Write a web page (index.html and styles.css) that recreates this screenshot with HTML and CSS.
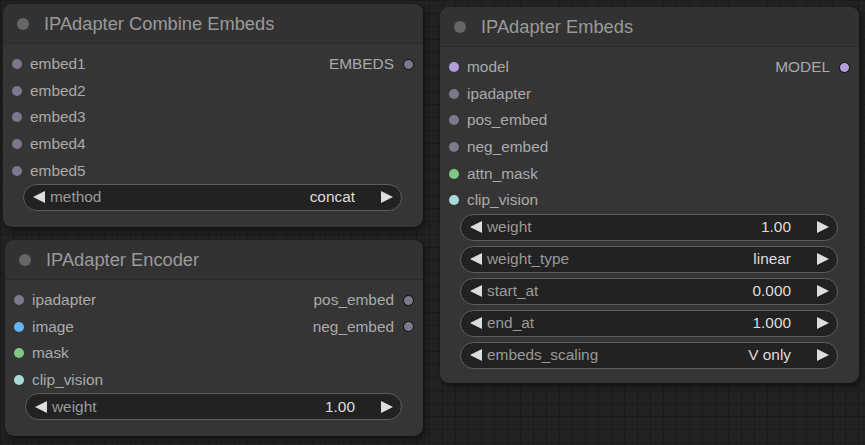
FILE: index.html
```html
<!DOCTYPE html>
<html>
<head>
<meta charset="utf-8">
<link rel="stylesheet" href="styles.css">
</head>
<body>
<div class="canvas">
  <div class="node node-combine">
    <div class="title"><span class="tdot"></span><span class="ttext">IPAdapter Combine Embeds</span></div>
    <div class="body">
      <div class="slots">
        <div class="col">
          <div class="slot in"><span class="dot c-gray"></span>embed1</div>
          <div class="slot in"><span class="dot c-gray"></span>embed2</div>
          <div class="slot in"><span class="dot c-gray"></span>embed3</div>
          <div class="slot in"><span class="dot c-gray"></span>embed4</div>
          <div class="slot in"><span class="dot c-gray"></span>embed5</div>
        </div>
        <div class="col right">
          <div class="slot out">EMBEDS<span class="dot out-dot c-gray"></span></div>
        </div>
      </div>
      <div class="widgets">
        <div class="widget"><svg class="arrow left" viewBox="0 0 12 12"><polygon points="12,0 12,12 0,6"/></svg><span class="wlabel">method</span><span class="wvalue">concat</span><svg class="arrow right" viewBox="0 0 12 12"><polygon points="0,0 0,12 12,6"/></svg></div>
      </div>
    </div>
  </div>

  <div class="node node-encoder">
    <div class="title"><span class="tdot"></span><span class="ttext">IPAdapter Encoder</span></div>
    <div class="body">
      <div class="slots">
        <div class="col">
          <div class="slot in"><span class="dot c-gray"></span>ipadapter</div>
          <div class="slot in"><span class="dot c-blue"></span>image</div>
          <div class="slot in"><span class="dot c-green"></span>mask</div>
          <div class="slot in"><span class="dot c-cyan"></span>clip_vision</div>
        </div>
        <div class="col right">
          <div class="slot out">pos_embed<span class="dot out-dot c-gray"></span></div>
          <div class="slot out">neg_embed<span class="dot out-dot c-gray"></span></div>
        </div>
      </div>
      <div class="widgets">
        <div class="widget"><svg class="arrow left" viewBox="0 0 12 12"><polygon points="12,0 12,12 0,6"/></svg><span class="wlabel">weight</span><span class="wvalue">1.00</span><svg class="arrow right" viewBox="0 0 12 12"><polygon points="0,0 0,12 12,6"/></svg></div>
      </div>
    </div>
  </div>

  <div class="node node-embeds">
    <div class="title"><span class="tdot"></span><span class="ttext">IPAdapter Embeds</span></div>
    <div class="body">
      <div class="slots">
        <div class="col">
          <div class="slot in"><span class="dot c-purple"></span>model</div>
          <div class="slot in"><span class="dot c-gray"></span>ipadapter</div>
          <div class="slot in"><span class="dot c-gray"></span>pos_embed</div>
          <div class="slot in"><span class="dot c-gray"></span>neg_embed</div>
          <div class="slot in"><span class="dot c-green"></span>attn_mask</div>
          <div class="slot in"><span class="dot c-cyan"></span>clip_vision</div>
        </div>
        <div class="col right">
          <div class="slot out">MODEL<span class="dot out-dot c-purple"></span></div>
        </div>
      </div>
      <div class="widgets">
        <div class="widget"><svg class="arrow left" viewBox="0 0 12 12"><polygon points="12,0 12,12 0,6"/></svg><span class="wlabel">weight</span><span class="wvalue">1.00</span><svg class="arrow right" viewBox="0 0 12 12"><polygon points="0,0 0,12 12,6"/></svg></div>
        <div class="widget"><svg class="arrow left" viewBox="0 0 12 12"><polygon points="12,0 12,12 0,6"/></svg><span class="wlabel">weight_type</span><span class="wvalue">linear</span><svg class="arrow right" viewBox="0 0 12 12"><polygon points="0,0 0,12 12,6"/></svg></div>
        <div class="widget"><svg class="arrow left" viewBox="0 0 12 12"><polygon points="12,0 12,12 0,6"/></svg><span class="wlabel">start_at</span><span class="wvalue">0.000</span><svg class="arrow right" viewBox="0 0 12 12"><polygon points="0,0 0,12 12,6"/></svg></div>
        <div class="widget"><svg class="arrow left" viewBox="0 0 12 12"><polygon points="12,0 12,12 0,6"/></svg><span class="wlabel">end_at</span><span class="wvalue">1.000</span><svg class="arrow right" viewBox="0 0 12 12"><polygon points="0,0 0,12 12,6"/></svg></div>
        <div class="widget"><svg class="arrow left" viewBox="0 0 12 12"><polygon points="12,0 12,12 0,6"/></svg><span class="wlabel">embeds_scaling</span><span class="wvalue">V only</span><svg class="arrow right" viewBox="0 0 12 12"><polygon points="0,0 0,12 12,6"/></svg></div>
      </div>
    </div>
  </div>
</div>
</body>
</html>
```

FILE: styles.css
```css
html, body {
  margin: 0;
  padding: 0;
}
body {
  width: 865px;
  height: 445px;
  overflow: hidden;
  background-color: #222222;
  background-image:
    linear-gradient(to right, #1b1b1b 1px, transparent 1px),
    linear-gradient(to bottom, #1b1b1b 1px, transparent 1px);
  background-size: 13px 13px;
  font-family: "Liberation Sans", Arial, sans-serif;
}
.canvas {
  position: relative;
  width: 865px;
  height: 445px;
}
.node {
  position: absolute;
  background: #353535;
  border-radius: 9px;
  box-shadow: 2px 3px 6px rgba(0, 0, 0, 0.55);
  display: flex;
  flex-direction: column;
  overflow: hidden;
}
.node-combine { left: 3px; top: 4px; width: 420px; height: 223px; }
.node-encoder { left: 5px; top: 240px; width: 418px; height: 196px; }
.node-embeds { left: 440px; top: 7px; width: 419px; height: 376px; }

.title {
  height: 40px;
  flex: none;
  display: flex;
  align-items: center;
  background: #323232;
  border-bottom: 1px solid #2b2b2b;
  box-sizing: border-box;
  padding-top: 1px;
}
.tdot {
  width: 12px;
  height: 12px;
  border-radius: 50%;
  background: #666666;
  margin-left: 14px;
  flex: none;
}
.ttext {
  margin-left: 15px;
  font-size: 18.3px;
  color: #9a9a9a;
  white-space: nowrap;
}
.body {
  padding: 7px 0 0 0;
  display: flex;
  flex-direction: column;
}
.slots {
  display: flex;
  justify-content: space-between;
}
.col {
  display: flex;
  flex-direction: column;
}
.slot {
  height: 26.6px;
  display: flex;
  align-items: center;
  font-size: 15.4px;
  color: #aaaaaa;
  white-space: nowrap;
}
.slot.in {
  padding-left: 9px;
}
.slot.out {
  padding-right: 9px;
  justify-content: flex-end;
}
.dot {
  width: 10px;
  height: 10px;
  border-radius: 50%;
  flex: none;
  box-sizing: border-box;
}
.slot.in .dot { margin-right: 8px; }
.slot.out .dot { margin-left: 9px; }
.out-dot { border: 1.5px solid #0d0d0d; width: 11px; height: 11px; }
.c-gray { background: #7a7a8c; }
.c-purple { background: #b39ddb; }
.c-blue { background: #64b5f6; }
.c-green { background: #81c784; }
.c-cyan { background: #a8dadc; }

.widgets {
  display: flex;
  flex-direction: column;
  gap: 5px;
  padding: 0 21px 0 20px;
}
.widget {
  height: 27px;
  box-sizing: border-box;
  border: 1px solid #5e5e5e;
  border-radius: 14px;
  background: #222222;
  display: flex;
  align-items: center;
  font-size: 15.4px;
  padding: 0 8px 0 9px;
}
.arrow {
  width: 12px;
  height: 12px;
  fill: #dddddd;
  flex: none;
}
.arrow.left { margin-right: 5px; }
.arrow.right { margin-left: 26px; }
.wlabel {
  color: #9a9a9a;
  flex: 1;
  white-space: nowrap;
}
.wvalue {
  color: #dddddd;
  white-space: nowrap;
}
```
